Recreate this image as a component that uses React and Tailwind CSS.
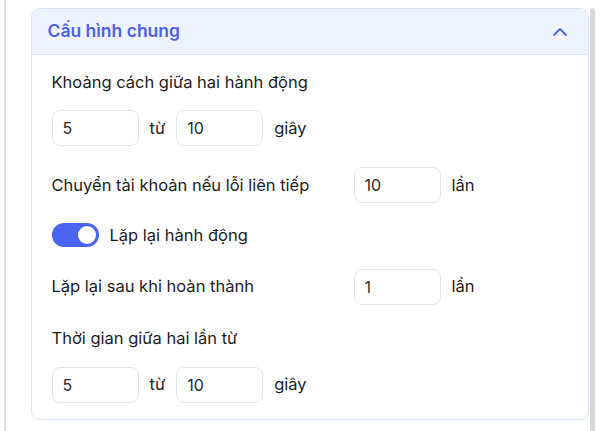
import React from "react";
import { ChevronUp } from "lucide-react";

const NumberBox = ({ value }) => (
    <div className="w-[87px] h-[36px] shrink-0 rounded-lg border border-[#e1e6ef] bg-white flex items-center pl-[10px] text-[16px] text-[#2b2b2b]">
        {value}
    </div>
);

const RangeRow = ({ from, to }) => (
    <div className="flex items-center gap-[11px]">
        <NumberBox value={from} />
        <span>từ</span>
        <NumberBox value={to} />
        <span>giây</span>
    </div>
);

const CountRow = ({ label, value }) => (
    <div className="flex items-center">
        <span className="w-[302px] shrink-0">{label}</span>
        <NumberBox value={value} />
        <span className="ml-[11px]">lần</span>
    </div>
);

export default function App() {
    return (
        <div
            className="w-[600px] h-[431px] flex bg-white overflow-hidden text-[16.5px] text-[#1c1c1c]"
            style={{ fontFamily: "Inter, 'Noto Sans', sans-serif" }}
        >
            <div className="ml-[4px] w-[1.5px] bg-[#dcdde3] shrink-0"></div>

            <div className="pl-[25px] pt-[8px] w-[558px] shrink-0 box-content">
                <div className="rounded-[9px] border border-[#d9e6fb] overflow-hidden">
                    {/* Tiêu đề */}
                    <div className="h-[46px] bg-[#eef4ff] border-b border-[#d9e6fb] flex items-center justify-between pl-[16px] pr-[16px]">
                        <span className="text-[17.5px] font-semibold text-[#4f5fe6]">Cấu hình chung</span>
                        <ChevronUp size={24} strokeWidth={1.8} className="text-[#4a63ee]" />
                    </div>

                    {/* Nội dung */}
                    <div className="pl-[20px] pt-[15px] pb-[16px] flex flex-col">
                        <span className="leading-6">Khoảng cách giữa hai hành động</span>
                        <div className="mt-[16px]">
                            <RangeRow from="5" to="10" />
                        </div>

                        <div className="mt-[21px]">
                            <CountRow label="Chuyển tài khoản nếu lỗi liên tiếp" value="10" />
                        </div>

                        <div className="mt-[20px] flex items-center">
                            <div className="w-[47px] h-[24px] rounded-full bg-[#4964ee] flex items-center justify-end pr-[3px]">
                                <div className="w-[18px] h-[18px] rounded-full bg-white"></div>
                            </div>
                            <span className="ml-[11px]">Lặp lại hành động</span>
                        </div>

                        <div className="mt-[21px]">
                            <CountRow label="Lặp lại sau khi hoàn thành" value="1" />
                        </div>

                        <span className="mt-[21px] leading-6">Thời gian giữa hai lần từ</span>
                        <div className="mt-[17px]">
                            <RangeRow from="5" to="10" />
                        </div>
                    </div>
                </div>
            </div>

            <div className="ml-[1px] mt-[8px] w-[5px] bg-[#d8d8d8] rounded-t-sm shrink-0"></div>
        </div>
    );
}
